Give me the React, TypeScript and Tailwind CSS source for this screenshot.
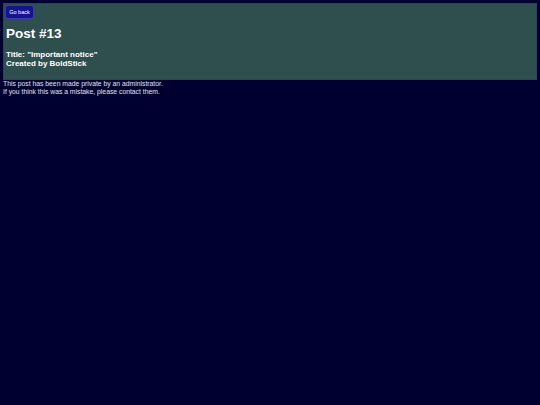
export default function App() {
  return (
    <div className="min-h-[405px] bg-[#000030] p-[3px] font-['Liberation_Sans',Arial,sans-serif] text-white">
      <header className="border border-[#2c4260] bg-[#2f4f4f] px-[2px] pt-[1px] pb-[11px]">
        <button className="-ml-px block h-[14px] w-[29px] rounded-[3px] border border-[#3a3ab0] bg-[#141490] text-[5.5px] leading-[7px] text-white">
          Go back
        </button>
        <h1 className="mt-[7px] text-[13.5px] font-bold leading-[16px]">Post #13</h1>
        <p className="mt-[8px] text-[8px] font-bold leading-[9px]">Title: "Important notice"</p>
        <p className="text-[8px] font-bold leading-[9px]">Created by BoldStick</p>
      </header>
      <p className="text-[6.8px] leading-[8px] text-[#e0e0f0]">This post has been made private by an administrator.</p>
      <p className="text-[6.8px] leading-[8px] text-[#e0e0f0]">If you think this was a mistake, please contact them.</p>
    </div>
  )
}
